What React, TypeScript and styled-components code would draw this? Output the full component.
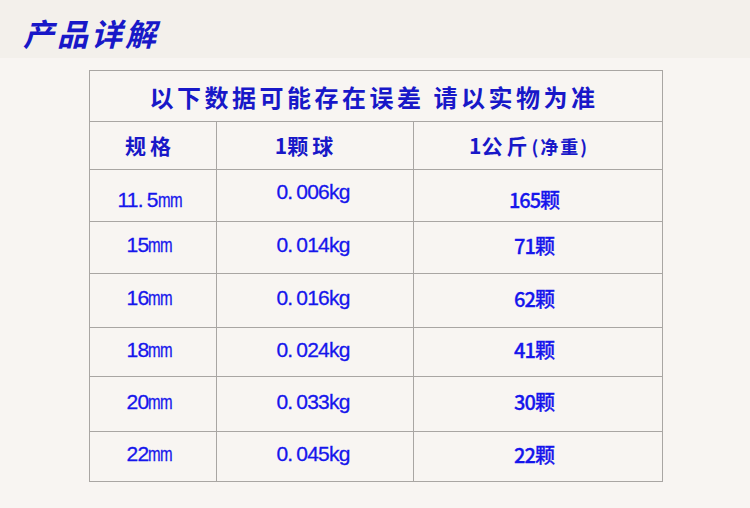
import styled, { createGlobalStyle } from "styled-components";

const GlobalStyle = createGlobalStyle`
  html, body {
    margin: 0;
    padding: 0;
    background: #f8f5f2;
  }
`;

const Page = styled.div`
  width: 750px;
  height: 508px;
  overflow: hidden;
  background: #f8f5f2;
`;

const Banner = styled.div`
  height: 58px;
  background: #f3f0eb;
  display: flex;
  align-items: center;
  padding-left: 23px;
`;

const Heading = styled.h1`
  margin: 0;
  font-family: "Noto Sans CJK SC", sans-serif;
  font-size: 31px;
  font-weight: 700;
  letter-spacing: 3px;
  color: #1818c8;
  font-style: italic;
  padding-top: 6px;
`;

const Body = styled.div`
  padding: 12px 0 0 89px;
`;

const Table = styled.table`
  border-collapse: collapse;
  width: 573px;
  table-layout: fixed;
  border-bottom: 1px solid #a9a6a3;
`;

const Row = styled.tr<{ $h: number }>`
  height: ${(p) => p.$h}px;
`;

const TitleCell = styled.th`
  border: 1px solid #a9a6a3;
  border-bottom: none;
  font-family: "Noto Sans CJK SC", sans-serif;
  font-size: 24px;
  font-weight: 700;
  letter-spacing: 3.5px;
  color: #1818c8;
  text-align: center;
  padding: 0 4px 0 0;
`;

const HeadCell = styled.th<{ $pr: number }>`
  border: 1px solid #a9a6a3;
  font-family: "Noto Sans CJK SC", sans-serif;
  font-size: 21px;
  font-weight: 700;
  letter-spacing: 4px;
  color: #1818c8;
  text-align: center;
  padding: 0 ${(p) => p.$pr}px 2px 0;
`;

const One = styled.span`
  letter-spacing: 0;
`;

const Paren = styled.span`
  font-size: 18px;
  letter-spacing: 2px;
`;

const Cell = styled.td<{ $pt: number; $pb: number; $pr?: number }>`
  border: 1px solid #a9a6a3;
  border-bottom: none;
  font-family: "Liberation Sans", "Noto Sans CJK SC", sans-serif;
  font-size: 21px;
  color: #1616ec;
  -webkit-text-stroke: 0.3px #1616ec;
  text-align: center;
  padding: ${(p) => p.$pt}px ${(p) => p.$pr ?? 0}px ${(p) => p.$pb}px 0;
  letter-spacing: -0.8px;
`;

const Dot = styled.span`
  margin-right: 4px;
`;

const Unit = styled.span`
  display: inline-block;
  letter-spacing: -1px;
  transform: scaleX(0.72);
  transform-origin: left center;
  margin-right: -10px;
`;

const Count = styled.span`
  font-family: "Noto Sans CJK SC", sans-serif;
  font-size: 20px;
  font-weight: 500;
  letter-spacing: -1px;
`;

type Spec = { size: string; weight: string; count: string; h: number };

const specs: Spec[] = [
  { size: "11.5", weight: "006", count: "165", h: 52 },
  { size: "15", weight: "014", count: "71", h: 52 },
  { size: "16", weight: "016", count: "62", h: 54 },
  { size: "18", weight: "024", count: "41", h: 49 },
  { size: "20", weight: "033", count: "30", h: 55 },
  { size: "22", weight: "045", count: "22", h: 50 },
];

const Size = ({ value }: { value: string }) => {
  const [whole, frac] = value.split(".");
  return (
    <>
      {whole}
      {frac && (
        <>
          <Dot>.</Dot>
          {frac}
        </>
      )}
      <Unit>mm</Unit>
    </>
  );
};

export default function App() {
  return (
    <Page>
      <GlobalStyle />
      <Banner>
        <Heading>产品详解</Heading>
      </Banner>
      <Body>
        <Table>
          <colgroup>
            <col style={{ width: 127 }} />
            <col style={{ width: 197 }} />
            <col style={{ width: 249 }} />
          </colgroup>
          <thead>
            <Row $h={51}>
              <TitleCell colSpan={3}>以下数据可能存在误差 请以实物为准</TitleCell>
            </Row>
            <Row $h={48}>
              <HeadCell $pr={6}>规格</HeadCell>
              <HeadCell $pr={18}>
                <One>1</One>颗球
              </HeadCell>
              <HeadCell $pr={18}>
                <One>1</One>公斤<Paren>(净重)</Paren>
              </HeadCell>
            </Row>
          </thead>
          <tbody>
            {specs.map((s, i) => {
              const first = i === 0;
              return (
                <Row key={s.size} $h={s.h}>
                  <Cell $pt={first ? 8 : 0} $pb={first ? 0 : 5} $pr={8}>
                    <Size value={s.size} />
                  </Cell>
                  <Cell $pt={0} $pb={first ? 8 : 5} $pr={4}>
                    0<Dot>.</Dot>
                    {s.weight}kg
                  </Cell>
                  <Cell $pt={first ? 8 : 0} $pb={first ? 0 : 5} $pr={8}>
                    <Count>{s.count}颗</Count>
                  </Cell>
                </Row>
              );
            })}
          </tbody>
        </Table>
      </Body>
    </Page>
  );
}
